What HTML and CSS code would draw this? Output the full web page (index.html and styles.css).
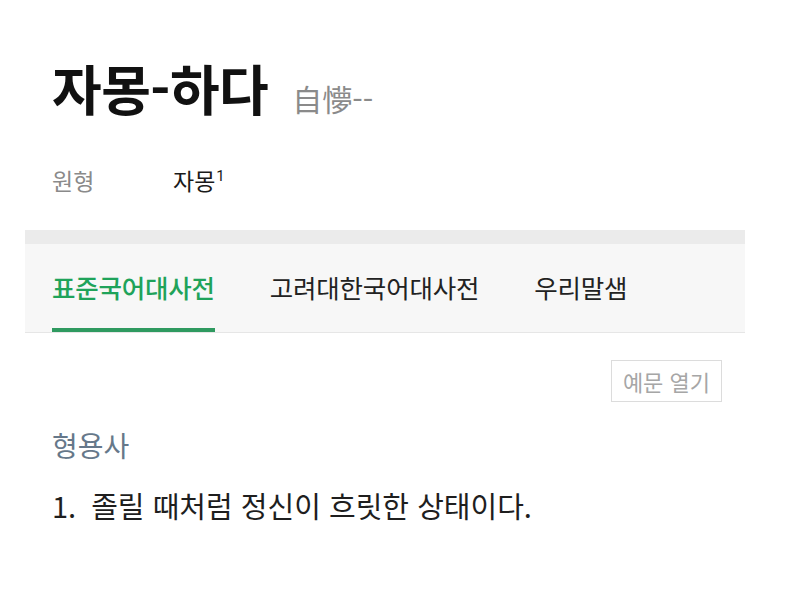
FILE: index.html
```html
<!DOCTYPE html>
<html lang="ko">
<head>
<meta charset="utf-8">
<title>자몽-하다</title>
<link rel="stylesheet" href="styles.css">
</head>
<body>
<div class="page">
  <header class="entry">
    <h1 class="headword">자몽-하다<span class="hanja">自懜--</span></h1>
    <div class="meta">
      <span class="meta-label">원형</span>
      <span class="meta-value">자몽<sup class="sup">1</sup></span>
    </div>
  </header>

  <section class="dict-panel">
    <div class="band"></div>
    <nav class="tabs">
      <span class="tab tab-active">표준국어대사전</span>
      <span class="tab">고려대한국어대사전</span>
      <span class="tab">우리말샘</span>
    </nav>
  </section>

  <div class="tools">
    <button class="example-btn">예문 열기</button>
  </div>

  <section class="sense">
    <div class="pos">형용사</div>
    <p class="definition"><span class="num">1.</span>졸릴 때처럼 정신이 흐릿한 상태이다.</p>
  </section>
</div>
</body>
</html>
```

FILE: styles.css
```css
html, body {
  margin: 0;
  padding: 0;
  background: #ffffff;
}
body {
  font-family: "Noto Sans CJK KR", "Noto Sans", sans-serif;
  color: #1a1a1a;
}
.page {
  width: 790px;
  height: 603px;
  overflow: hidden;
}
.entry {
  padding: 58px 0 0 52px;
}
.headword {
  margin: 0;
  font-size: 54px;
  line-height: 60px;
  font-weight: 700;
  color: #111;
  letter-spacing: -0.5px;
}
.hanja {
  font-size: 30px;
  font-weight: 400;
  color: #8a8a8a;
  margin-left: 24px;
  letter-spacing: 0;
}
.meta {
  display: flex;
  margin-top: 37px;
  line-height: 30px;
  font-size: 23px;
}
.meta-label {
  width: 121px;
  color: #8a8a8a;
}
.meta-value {
  color: #1a1a1a;
}
.sup {
  font-family: "Roboto", "Noto Sans", sans-serif;
  font-size: 15px;
  vertical-align: 9px;
  line-height: 0;
  margin-left: 1px;
}
.dict-panel {
  margin: 35px 45px 0 25px;
}
.band {
  height: 14px;
  background: #ebebeb;
}
.tabs {
  display: flex;
  gap: 55px;
  height: 88px;
  padding-left: 27px;
  background: #f7f7f7;
  border-bottom: 1px solid #e6e6e6;
}
.tab {
  display: flex;
  align-items: center;
  padding-top: 0;
  border-bottom: 4px solid transparent;
  font-size: 25.5px;
  color: #222;
  letter-spacing: -0.2px;
}
.tab-active {
  color: #1fa35a;
  font-weight: 500;
  border-bottom-color: #2f9a60;
}
.tools {
  display: flex;
  justify-content: flex-end;
  padding-right: 68px;
  margin-top: 27px;
}
.example-btn {
  height: 42px;
  padding: 0 11px;
  background: #fff;
  border: 1px solid #dcdcdc;
  font-family: inherit;
  font-size: 22px;
  color: #a6a6a6;
  cursor: pointer;
}
.sense {
  padding-left: 52px;
  margin-top: 25px;
}
.pos {
  font-size: 28px;
  line-height: 36px;
  color: #66788a;
}
.definition {
  margin: 24px 0 0;
  font-size: 29px;
  line-height: 36px;
  color: #1e1e1e;
}
.num {
  margin-right: 15px;
}
```
